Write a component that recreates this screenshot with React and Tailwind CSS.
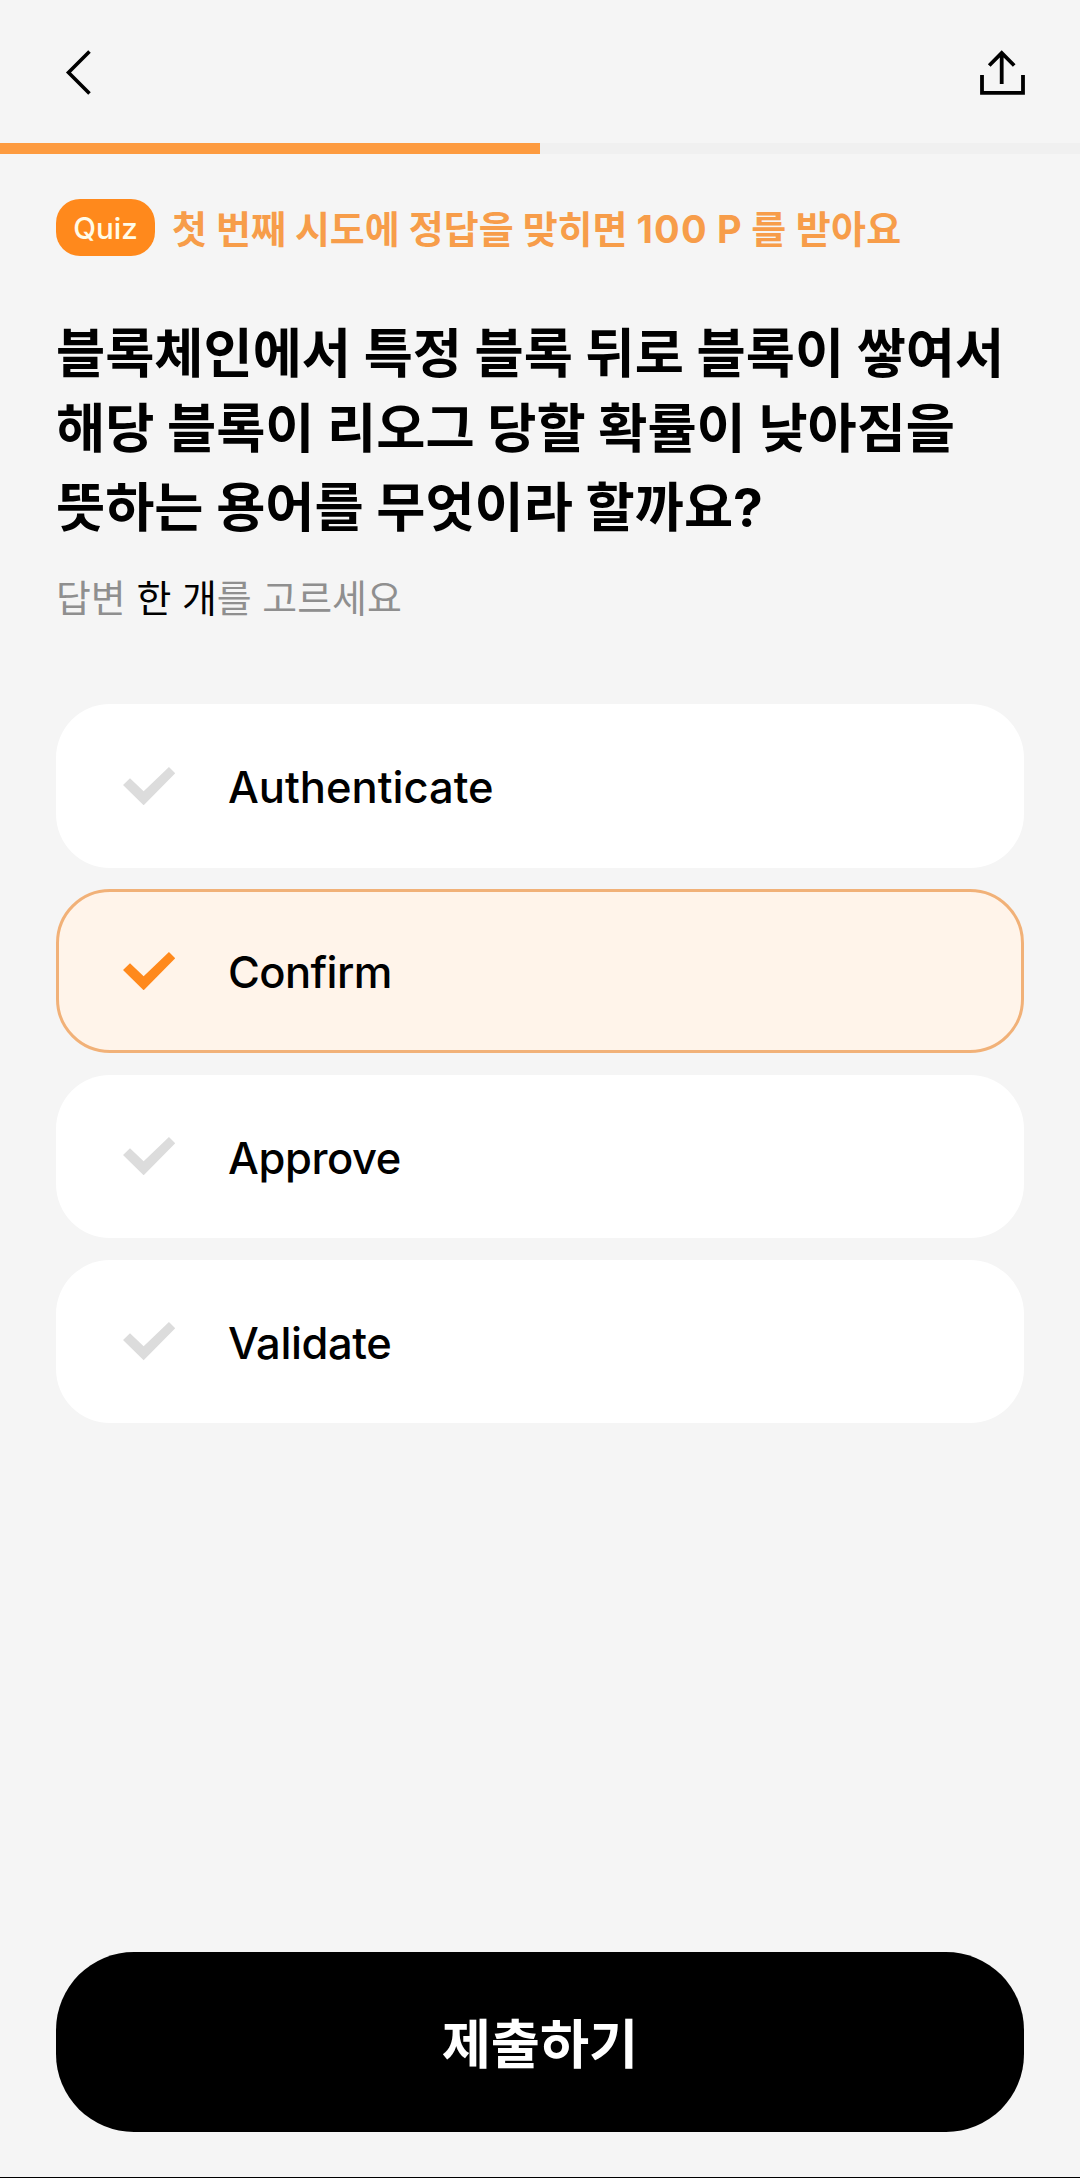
const ANSWERS = [
  { label: 'Authenticate', selected: false, tracking: 'tracking-[0px]' },
  { label: 'Confirm', selected: true, tracking: 'tracking-[-0.6px]' },
  { label: 'Approve', selected: false, tracking: 'tracking-[-0.4px]' },
  { label: 'Validate', selected: false, tracking: 'tracking-[-0.4px]' },
];

function Check({ selected }) {
  return (
    <svg
      viewBox="0 0 157 115"
      className={`ml-[66.7px] h-[38.3px] w-[52.3px] shrink-0 ${selected ? 'text-[#ff891c]' : 'text-[#dcdcdc]'}`}
      fill="currentColor"
    >
      <path d="M0 54L21 34L62 73L138 0L157 19L62 115Z" />
    </svg>
  );
}

function Answer({ label, selected, tracking }) {
  return (
    <div
      className={`relative flex h-[163.5px] items-center rounded-[54px] ${selected ? 'bg-[#fff4ea]' : 'bg-white'}`}
    >
      {selected && <span className="absolute inset-0 rounded-[54px] border-3 border-[#f1b178]" />}
      <Check selected={selected} />
      <span className={`mt-1 ml-[53px] text-[43.5px] leading-none font-[450] ${tracking}`}>{label}</span>
    </div>
  );
}

export default function App() {
  return (
    <div className="flex h-[2178px] w-[1080px] flex-col overflow-hidden whitespace-nowrap border-b border-black bg-[#f5f5f5] font-['Inter','Noto_Sans_CJK_KR',sans-serif] text-black">
      <header className="flex h-[143px] shrink-0 items-start justify-between pt-[48px] pr-[54px] pl-[64px]">
        <svg width="30" height="50" viewBox="0 0 30 50" fill="none" stroke="currentColor" strokeWidth="3.6">
          <path d="M25.5 3.5L4.5 24.5L25.5 45.5" />
        </svg>
        <svg width="49" height="50" viewBox="0 0 49 50" fill="none" stroke="currentColor" strokeWidth="3.8">
          <path d="M5 27V44.9H46V27M24.7 36V5M12.2 17.5L24.7 5L37.2 17.5" />
        </svg>
      </header>
      <div className="h-[11px] shrink-0 bg-[#f0f0f0]">
        <div className="h-full w-1/2 bg-[#fd9b40]" />
      </div>

      <main className="flex flex-1 flex-col px-14 pt-[45px]">
        <div className="flex h-[57px] items-center">
          <span className="flex h-[57px] w-[99px] items-center justify-center rounded-[24px] bg-[#ff891c] pt-[3px] text-[29.6px] leading-none font-medium text-[#fffbe8]">
            Quiz
          </span>
          <span className="mt-1 ml-[17px] text-[38px] leading-[57px] font-bold text-[#f79d4a]">
            첫 번째 시도에 정답을 맞히면 <span className="tracking-[1.2px]">100</span>
            <span className="tracking-[0.3px]"> P 를 받아요</span>
          </span>
        </div>

        <h1 className="mt-[60px] text-[53.45px] font-bold">
          <span className="block h-[75px] leading-[75px]">블록체인에서 특정 블록 뒤로 블록이 쌓여서</span>
          <span className="block h-[79px] leading-[75px]">해당 블록이 리오그 당할 확률이 낮아짐을</span>
          <span className="block h-[75px] leading-[75px]">뜻하는 용어를 무엇이라 할까요?</span>
        </h1>

        <p className="mt-[25px] h-[57px] text-[37.9px] leading-[57px] text-[#8f8f8f]">
          답변 <span className="text-black">한 개</span>를 고르세요
        </p>

        <div className="mt-[77px] flex flex-col gap-[21.8px]">
          {ANSWERS.map((a) => (
            <Answer key={a.label} {...a} />
          ))}
        </div>

        <button className="mt-auto mb-[45px] flex h-[180px] shrink-0 items-center justify-center rounded-[78px] bg-black pt-1.5 text-[53.4px] font-bold text-white">
          제출하기
        </button>
      </main>
    </div>
  );
}
